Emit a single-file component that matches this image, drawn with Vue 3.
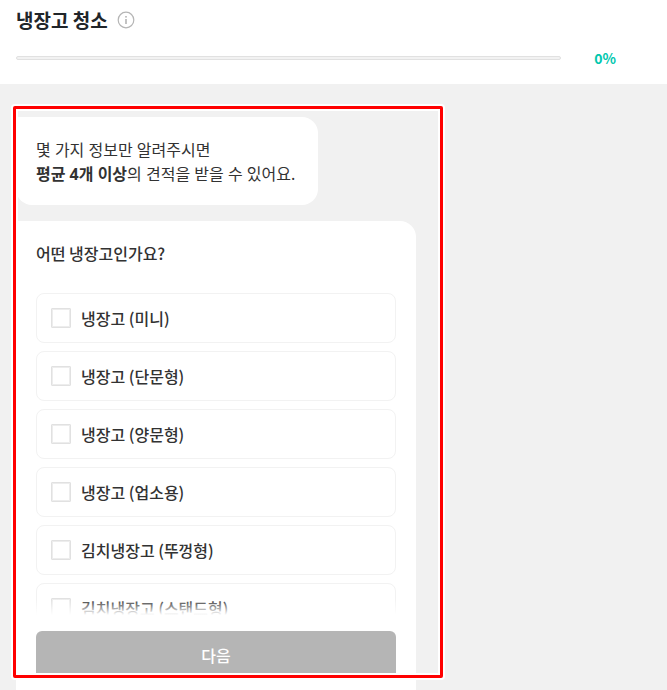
<script setup>
import { ref } from 'vue'

const progress = ref(0)
const selected = ref([])
const options = [
  '냉장고 (미니)',
  '냉장고 (단문형)',
  '냉장고 (양문형)',
  '냉장고 (업소용)',
  '김치냉장고 (뚜껑형)',
  '김치냉장고 (스탠드형)',
]
</script>

<template>
  <div class="page">
    <header class="header">
      <div class="title-row">
        <h1 class="title">냉장고 청소</h1>
        <button class="info" type="button" aria-label="안내">
          <svg width="18" height="18" viewBox="0 0 18 18" fill="none">
            <circle cx="9" cy="9" r="7.8" stroke="#b5b5b5" stroke-width="1.2" />
            <rect x="8.2" y="5" width="1.6" height="1.6" fill="#b5b5b5" />
            <rect x="8.2" y="8" width="1.6" height="5" fill="#b5b5b5" />
          </svg>
        </button>
      </div>
      <div class="progress-row">
        <div class="track" role="progressbar" :aria-valuenow="progress" aria-valuemin="0" aria-valuemax="100">
          <div class="fill" :style="{ width: progress + '%' }"></div>
        </div>
        <span class="percent">{{ progress }}%</span>
      </div>
    </header>

    <main class="chat">
      <p class="bubble">몇 가지 정보만 알려주시면<br /><strong>평균 4개 이상</strong>의 견적을 받을 수 있어요.</p>

      <form class="card" @submit.prevent>
        <h2 class="question">어떤 냉장고인가요?</h2>
        <div class="list-wrap">
          <ul class="list">
            <li v-for="(option, i) in options" :key="option">
              <label class="option" :for="'option-' + i">
                <input :id="'option-' + i" v-model="selected" class="check" type="checkbox" :value="option" />
                <span>{{ option }}</span>
              </label>
            </li>
          </ul>
        </div>
        <button class="next" type="submit">다음</button>
      </form>

      <div class="highlight" aria-hidden="true"></div>
    </main>
  </div>
</template>

<style>
body {
  margin: 0;
}
</style>

<style scoped>
.page {
  display: flex;
  flex-direction: column;
  height: 100vh;
  overflow: hidden;
  background: #f1f1f1;
  color: #323232;
  font-family: 'Noto Sans CJK KR', 'Noto Sans', sans-serif;
  font-size: 16px;
  line-height: 24px;
}

.header {
  flex: none;
  box-sizing: border-box;
  height: 84px;
  padding: 8px 16px 0;
  background: #fff;
}

.title-row {
  display: flex;
  align-items: center;
  gap: 9px;
}

.title {
  margin: 0;
  color: #212529;
  font-size: 19px;
  font-weight: 700;
  line-height: 24px;
}

.info {
  display: flex;
  padding: 0;
  border: 0;
  background: none;
}

.progress-row {
  display: flex;
  align-items: center;
  margin-top: 14px;
}

.track {
  flex: 1;
  box-sizing: border-box;
  height: 4px;
  border: 1px solid #e1e1e1;
  border-radius: 2px;
  background: #f2f2f2;
}

.fill {
  height: 100%;
  background: #00c7ae;
}

.percent {
  width: 88px;
  margin-right: 2px;
  color: #00c7ae;
  font-size: 14px;
  font-weight: 700;
  text-align: center;
}

.chat {
  position: relative;
  display: flex;
  flex: 1;
  flex-direction: column;
  align-items: flex-start;
  gap: 16px;
  min-height: 0;
  padding: 33px 16px 0;
}

.bubble {
  flex: none;
  margin: 0;
  padding: 21px 23px 19px 20px;
  border-radius: 0 16px 16px 16px;
  background: #fff;
  font-family: 'Noto Sans', 'Noto Sans CJK KR', sans-serif;
}

.bubble strong {
  font-weight: 700;
}

.card {
  flex: none;
  box-sizing: border-box;
  width: 100%;
  max-width: 400px;
  padding: 20px 20px 32px;
  border-radius: 0 16px 16px 16px;
  background: #fff;
}

.question {
  margin: 0 0 28px;
  font-size: 16px;
  font-weight: 500;
  line-height: 24px;
}

.list-wrap {
  position: relative;
}

.list-wrap::after {
  position: absolute;
  right: 0;
  bottom: 0;
  left: 0;
  height: 16px;
  background: linear-gradient(rgba(255, 255, 255, 0), #fff);
  content: '';
  pointer-events: none;
}

.list {
  display: flex;
  flex-direction: column;
  gap: 8px;
  max-height: 322px;
  margin: 0;
  padding: 0;
  overflow-y: auto;
  list-style: none;
  scrollbar-width: none;
}

.option {
  display: flex;
  align-items: center;
  gap: 10px;
  box-sizing: border-box;
  height: 50px;
  padding: 0 14px;
  border: 1px solid #f2f2f2;
  border-radius: 8px;
  font-weight: 500;
}

.check {
  box-sizing: border-box;
  width: 20px;
  height: 20px;
  margin: 0;
  border: 1px solid #e1e1e1;
  border-radius: 1px;
  box-shadow: inset 0 0 0 1px #ededed;
  appearance: none;
  background: #fff;
}

.check:checked {
  background: #00c7ae;
}

.next {
  display: block;
  width: 100%;
  height: 48px;
  margin-top: 16px;
  padding: 0;
  border: 0;
  border-radius: 6px;
  background: #b5b5b5;
  color: #fff;
  font: inherit;
  font-weight: 500;
}

/* Annotation frame laid over the conversation */
.highlight {
  position: absolute;
  top: 22px;
  bottom: 12px;
  left: 13px;
  box-sizing: border-box;
  width: 430px;
  border: 3px solid #f00;
  border-radius: 2px;
  box-shadow: 0 0 0 2px #fff, inset 0 0 0 2px #fff;
  pointer-events: none;
}
</style>
